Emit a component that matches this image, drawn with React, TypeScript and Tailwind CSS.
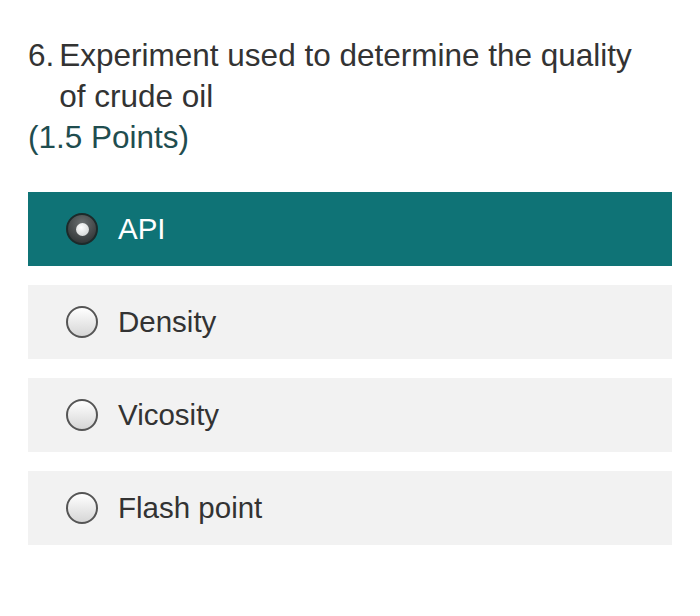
import React from "react";

const options = ["API", "Density", "Vicosity", "Flash point"];

function Radio({ checked }: { checked: boolean }) {
  if (checked) {
    return (
      <span className="flex h-[32px] w-[32px] items-center justify-center rounded-full border-2 border-[#1c2a2a] bg-[radial-gradient(circle_at_50%_30%,#6b6f70,#262a2b)]">
        <span className="h-[13px] w-[13px] rounded-full bg-[radial-gradient(circle_at_40%_35%,#ffffff,#c9cccc)]" />
      </span>
    );
  }
  return (
    <span className="h-[32px] w-[32px] rounded-full border-2 border-[#555] bg-[linear-gradient(to_bottom,#ffffff,#d6d6d6)]" />
  );
}

export default function App() {
  return (
    <div className="min-h-[616px] w-[700px] bg-white px-[28px] pt-[35px] font-['Liberation_Sans',Arial,sans-serif]">
      <div className="text-[31.5px] leading-[41px] text-[#333]">
        <div className="flex">
          <span className="mr-[5px]">6.</span>
          <span>
            Experiment used to determine the quality
            <br />
            of crude oil
          </span>
        </div>
        <div className="text-[#1f4d4f]">(1.5 Points)</div>
      </div>
      <div className="mt-[34px] flex flex-col gap-[19px]">
        {options.map((o, i) => (
          <div
            key={o}
            className={
              i === 0
                ? "flex h-[74px] w-[644px] items-center gap-[20px] bg-[#0f7376] pl-[38px] text-[29.5px] text-white"
                : "flex h-[74px] w-[644px] items-center gap-[20px] bg-[#f2f2f2] pl-[38px] text-[29.5px] text-[#333]"
            }
          >
            <Radio checked={i === 0} />
            <span>{o}</span>
          </div>
        ))}
      </div>
    </div>
  );
}
